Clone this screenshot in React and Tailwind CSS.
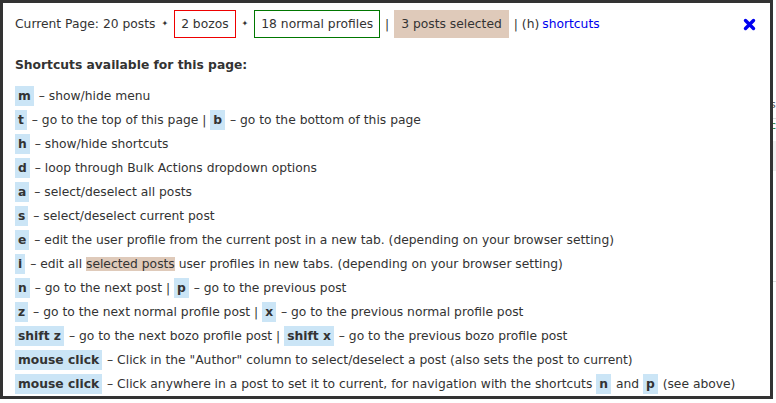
import React from 'react'

const Key = ({ children }) => (
  <span className="inline-block bg-[#cbe5f6] px-[3px] mr-[1px] leading-[20px] font-bold text-[#333]">{children}</span>
)

const rows = [
  [<Key>m</Key>, ' – show/hide menu'],
  [<Key>t</Key>, ' – go to the top of this page | ', <Key>b</Key>, ' – go to the bottom of this page'],
  [<Key>h</Key>, ' – show/hide shortcuts'],
  [<Key>d</Key>, ' – loop through Bulk Actions dropdown options'],
  [<Key>a</Key>, ' – select/deselect all posts'],
  [<Key>s</Key>, ' – select/deselect current post'],
  [<Key>e</Key>, ' – edit the user profile from the current post in a new tab. (depending on your browser setting)'],
  [
    <Key>i</Key>,
    ' – edit all ',
    <span className="bg-[#dfcaba]">selected posts</span>,
    ' user profiles in new tabs. (depending on your browser setting)',
  ],
  [<Key>n</Key>, ' – go to the next post | ', <Key>p</Key>, ' – go to the previous post'],
  [<Key>z</Key>, ' – go to the next normal profile post | ', <Key>x</Key>, ' – go to the previous normal profile post'],
  [<Key>shift z</Key>, ' – go to the next bozo profile post | ', <Key>shift x</Key>, ' – go to the previous bozo profile post'],
  [<Key>mouse click</Key>, ' – Click in the "Author" column to select/deselect a post (also sets the post to current)'],
  [
    <Key>mouse click</Key>,
    ' – Click anywhere in a post to set it to current, for navigation with the shortcuts ',
    <Key>n</Key>,
    ' and ',
    <Key>p</Key>,
    ' (see above)',
  ],
]

export default function App() {
  return (
    <div className="relative w-[776px] h-[403px] overflow-hidden bg-white text-[12.3px] text-[#333] [font-family:'DejaVu_Sans',sans-serif]">
      {/* page behind the overlay */}
      <div className="flex flex-col items-end pt-[98px] pr-0">
        <div className="w-[6px] text-[11px] leading-[14px] text-[#555]">s</div>
        <div className="w-[6px] mt-[6px] border-t border-[#ddd] text-[11px] leading-[14px] text-[#2a7a3a]">c</div>
        <div className="w-[6px] h-[30px] mt-[8px] bg-[#eee]" />
        <div className="w-[6px] h-[90px] mt-[110px] border-t border-[#ddd]" />
      </div>

      <div className="absolute top-0 left-0 w-[773px] h-[399px] border-[3px] border-[#333] bg-white px-[12px] pt-[7px]">
        <div className="flex items-center whitespace-nowrap">
          <span>Current Page: 20 posts</span>
          <span className="mx-[6px] text-[8px]">✦</span>
          <span className="border border-[#e00] px-[6px] leading-[26px]">2 bozos</span>
          <span className="mx-[6px] text-[8px]">✦</span>
          <span className="border border-[#070] px-[6px] leading-[26px]">18 normal profiles</span>
          <span className="mx-[5px]">|</span>
          <span className="bg-[#dfcaba] px-[7px] leading-[28px]">3 posts selected</span>
          <span className="ml-[5px]">| (h) </span>
          <span className="ml-[3px] text-[#0000ee]">shortcuts</span>
          <div className="flex-1" />
          <svg width="13" height="13" viewBox="0 0 13 13" className="mr-[2px]">
            <path d="M2.5 2.5 L10.5 10.5 M10.5 2.5 L2.5 10.5" stroke="#0000f0" strokeWidth="3.4" strokeLinecap="round" />
          </svg>
        </div>

        <div className="mt-[18px] font-bold leading-[18px]">Shortcuts available for this page:</div>

        <div className="mt-[10px]">
          {rows.map((r, i) => (
            <div key={i} className="leading-[24px] whitespace-nowrap">
              {r.map((p, j) => (
                <React.Fragment key={j}>{p}</React.Fragment>
              ))}
            </div>
          ))}
        </div>
      </div>
    </div>
  )
}
